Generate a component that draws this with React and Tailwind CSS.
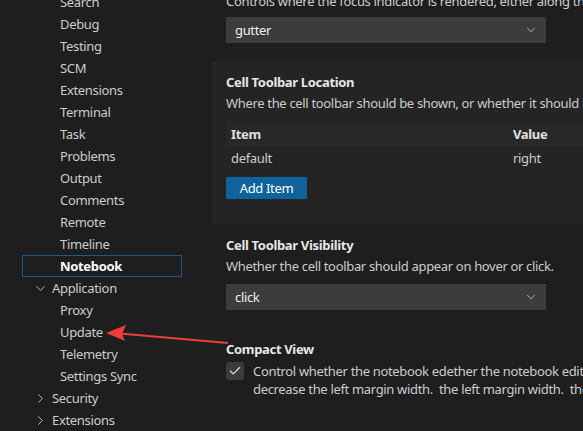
import { ChevronDown, ChevronRight, Check } from "lucide-react";

const subItems = [
  "Search",
  "Debug",
  "Testing",
  "SCM",
  "Extensions",
  "Terminal",
  "Task",
  "Problems",
  "Output",
  "Comments",
  "Remote",
  "Timeline",
];

const appItems = ["Proxy", "Update", "Telemetry", "Settings Sync"];

const TreeRow = ({ children, active }) => (
  <div
    className={`h-[22px] flex items-center pl-[37px] border ${
      active ? "border-[#1b5a8a] text-white font-bold" : "border-transparent"
    }`}
  >
    {children}
  </div>
);

const GroupRow = ({ open, label }) => (
  <div className="h-[22px] flex items-center pl-[10px] border border-transparent">
    {open ? (
      <ChevronDown size={15} strokeWidth={1.5} className="mr-[4px] text-[#c5c5c5]" />
    ) : (
      <ChevronRight size={15} strokeWidth={1.5} className="mr-[4px] text-[#c5c5c5]" />
    )}
    {label}
  </div>
);

const Select = ({ value }) => (
  <div className="w-[320px] h-[26px] bg-[#3c3c3c] flex items-center justify-between pl-[9px] pr-[8px] text-[#f0f0f0]">
    <span>{value}</span>
    <ChevronDown size={14} strokeWidth={1.5} className="text-[#c5c5c5]" />
  </div>
);

export default function App() {
  return (
    <div className="relative w-[583px] h-[431px] overflow-hidden bg-[#1e1e1e] text-[13px] tracking-[-0.33px] text-[#cccccc] font-['Noto_Sans',sans-serif] leading-none">
      <div className="flex items-start">
        {/* settings tree */}
        <div className="w-[212px] shrink-0 pl-[22px] mt-[-9px]">
          <div className="w-[160px]">
            {subItems.map((item) => (
              <TreeRow key={item}>{item}</TreeRow>
            ))}
            <TreeRow active>Notebook</TreeRow>
            <GroupRow open label="Application" />
            {appItems.map((item) => (
              <TreeRow key={item}>{item}</TreeRow>
            ))}
            <GroupRow label="Security" />
            <GroupRow label="Extensions" />
          </div>
        </div>

        {/* settings list */}
        <div className="flex-1 min-w-0 whitespace-nowrap mt-[-8px]">
          <div className="pl-[14px]">
            <div className="h-[18px] flex items-center">
              Controls where the focus indicator is rendered, either along the cell
            </div>
            <div className="mt-[7px]">
              <Select value="gutter" />
            </div>
          </div>

          <div className="mt-[18px] h-[163px] bg-[#242425] pl-[14px] pt-[12px]">
            <div className="h-[18px] flex items-center font-bold text-[#e7e7e7]">
              Cell Toolbar Location
            </div>
            <div className="h-[22px] flex items-center mt-[1px]">
              Where the cell toolbar should be shown, or whether it should be hidden.
            </div>
            <div className="mt-[8px] h-[24px] bg-[#282829] flex items-center font-bold text-[#e0e0e0]">
              <div className="w-[287px] pl-[5px]">Item</div>
              <div>Value</div>
            </div>
            <div className="h-[24px] flex items-center">
              <div className="w-[287px] pl-[5px]">default</div>
              <div>right</div>
            </div>
            <div className="mt-[7px] w-[81px] h-[22px] bg-[#0e639c] text-white flex items-center justify-center">
              Add Item
            </div>
          </div>

          <div className="pl-[14px] pt-[12px]">
            <div className="h-[18px] flex items-center font-bold text-[#e7e7e7]">
              Cell Toolbar Visibility
            </div>
            <div className="h-[22px] flex items-center mt-[1px]">
              Whether the cell toolbar should appear on hover or click.
            </div>
            <div className="mt-[7px]">
              <Select value="click" />
            </div>

            <div className="mt-[30px] h-[18px] flex items-center font-bold text-[#e7e7e7]">
              Compact View
            </div>
            <div className="flex mt-[4px]">
              <div className="w-[18px] h-[18px] shrink-0 bg-[#3c3c3c] rounded-[3px] flex items-center justify-center">
                <Check size={14} strokeWidth={2} className="text-[#e0e0e0]" />
              </div>
              <div className="ml-[9px] leading-[18px]">
                <div>Control whether the notebook edether the notebook editor should be rendered in a compact form.</div>
                <div>decrease the left margin width.&nbsp; the left margin width.&nbsp; the</div>
              </div>
            </div>
          </div>
        </div>
      </div>

      {/* annotation arrow */}
      <svg
        className="absolute left-0 top-0 pointer-events-none"
        width="583"
        height="431"
        viewBox="0 0 583 431"
      >
        <line x1="228" y1="343" x2="120" y2="333.5" stroke="#ee3b3b" strokeWidth="2.2" />
        <polygon points="106,333 126,325 122,334 125,341" fill="#ee3b3b" />
      </svg>
    </div>
  );
}
